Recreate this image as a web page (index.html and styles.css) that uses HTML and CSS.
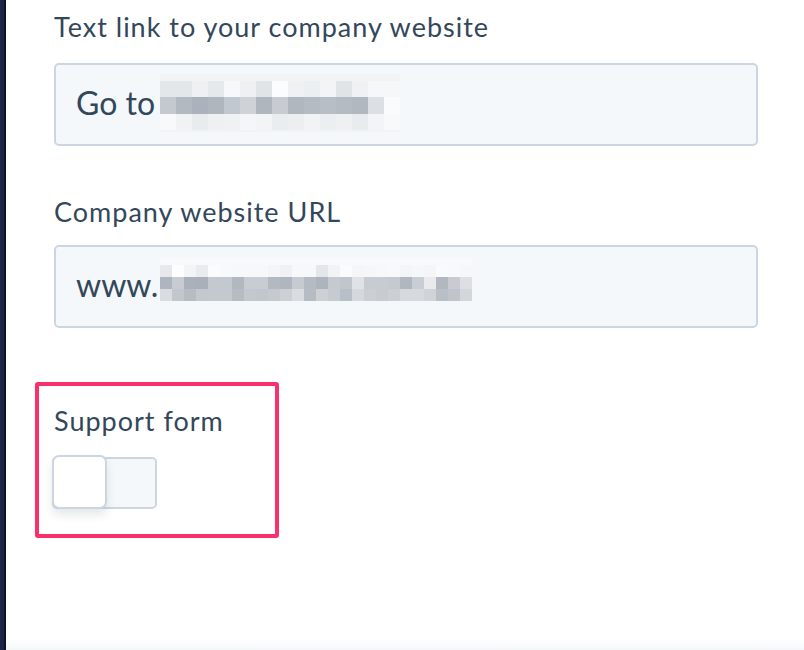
FILE: index.html
```html
<!DOCTYPE html>
<html lang="en">
<head>
<meta charset="utf-8">
<title>Settings</title>
<link rel="stylesheet" href="styles.css">
</head>
<body>
<div class="page">
  <aside class="rail"></aside>
  <main class="panel">
    <div class="field">
      <label class="label">Text link to your company website</label>
      <div class="input">
        <span class="value">Go to</span>
        <span class="blur blur-one">
          <span class="row r-faint"></span>
          <span class="row r1a"></span>
          <span class="row r1b"></span>
          <span class="row r1c"></span>
          <span class="row r-faint r-end"></span>
        </span>
      </div>
    </div>
    <div class="field field-second">
      <label class="label">Company website URL</label>
      <div class="input">
        <span class="value">www.</span>
        <span class="blur blur-two">
          <span class="row r-faint2"></span>
          <span class="row r2a"></span>
          <span class="row r2b"></span>
          <span class="row r2c"></span>
        </span>
      </div>
    </div>
    <div class="highlight">
      <div class="label">Support form</div>
      <div class="toggle">
        <span class="knob"></span>
      </div>
    </div>
  </main>
</div>
<div class="footer-shade"></div>
</body>
</html>
```
FILE: styles.css
```css
html, body {
  margin: 0;
  padding: 0;
  background: #ffffff;
  height: 100%;
  overflow: hidden;
}
body {
  font-family: Lato, "Open Sans", sans-serif;
  color: #33475b;
  position: relative;
}
.page {
  display: flex;
  height: 650px;
}
.rail {
  width: 4px;
  flex: none;
  background: #1e2448;
  border-right: 2px solid #0f1226;
}
.panel {
  flex: 1;
  padding: 0 46px 0 48px;
  display: flex;
  flex-direction: column;
}
.field {
  display: flex;
  flex-direction: column;
}
.label {
  display: block;
  font-size: 27px;
  line-height: 32px;
  letter-spacing: 1px;
  padding-top: 11px;
  color: #33475b;
  white-space: nowrap;
}
.input {
  margin-top: 20px;
  height: 79px;
  border: 2px solid #cbd6e2;
  border-radius: 5px;
  background: #f5f8fa;
  display: flex;
  align-items: center;
  padding-left: 20px;
}
.value {
  font-size: 32px;
  line-height: 40px;
  color: #33475b;
  margin-top: -4px;
}
.field-second {
  margin-top: 39px;
}
.field-second .input {
  margin-top: 17px;
}
.blur {
  display: flex;
  flex-direction: column;
  align-self: flex-start;
}
.blur-one {
  width: 240px;
  margin-left: 5px;
  margin-top: 9px;
}
.blur-two {
  width: 312px;
  margin-left: 2px;
  margin-top: 11px;
}
.row {
  display: block;
}
.r-faint { height: 7px; background: #f1f3f5; }
.r-end { height: 2px; }
.r-faint2 { height: 7px; background: #f8f9fa; }
.r1a {
  height: 16px;
  background: linear-gradient(90deg, #e4e7ea 0 32px, #eef0f2 32px 48px, #e6e9ec 48px 64px, #f7f8f9 64px 80px, #eef0f2 80px 96px, #e1e4e7 96px 112px, #fbfcfd 112px 128px, #eff1f3 128px 144px, #eceff1 144px 160px, #f3f4f6 160px 176px, #e1e4e7 176px 192px, #f0f1f3 192px 208px, #f5f7f9 208px 240px);
}
.r1b {
  height: 17px;
  background: linear-gradient(90deg, #c4c9d0 0 16px, #b3b9c1 16px 32px, #abb2bb 32px 48px, #afb6be 48px 64px, #c2c8d0 64px 80px, #cfd3d7 80px 96px, #afb6be 96px 112px, #c8ccd2 112px 128px, #b0b7bf 128px 144px, #b5bbc3 144px 160px, #b8bec5 160px 176px, #b5bbc3 176px 192px, #b1b8c0 192px 208px, #dcdfe3 208px 224px, #fafbfc 224px 240px);
}
.r1c {
  height: 16px;
  background: linear-gradient(90deg, #f8f9fa 0 16px, #f0f2f4 16px 32px, #e9ecee 32px 48px, #eef0f2 48px 64px, #eff1f3 64px 80px, #f5f6f7 80px 96px, #f3f4f6 96px 112px, #eaedef 112px 128px, #eceef0 128px 144px, #f1f3f4 144px 160px, #eceff1 160px 176px, #eef0f2 176px 192px, #e9ecee 192px 208px, #f3f4f6 208px 224px, #f8f9fa 224px 240px);
}
.r2a {
  height: 12px;
  background: linear-gradient(90deg, #e6e8eb 0 12px, #fdfdfe 12px 24px, #f3f4f6 24px 36px, #e9ecee 36px 48px, #fafbfc 48px 60px, #f8f9fa 60px 72px, #f7f8fa 72px 108px, #f4f5f7 108px 120px, #eff1f3 120px 132px, #f7f8fa 132px 156px, #e3e6ea 156px 168px, #f1f3f5 168px 180px, #fafbfc 180px 192px, #f5f6f8 192px 204px, #f6f7f9 204px 216px, #f7f8fa 216px 228px, #f8f9fb 228px 240px, #f4f5f7 240px 252px, #f6f7f9 252px 264px, #f4f5f7 264px 276px, #f9fafb 276px 288px, #f8f9fa 288px 300px, #f6f7f9 300px 312px);
}
.r2b {
  height: 12px;
  background: linear-gradient(90deg, #aeb5be 0 12px, #c7ccd3 12px 24px, #aab1ba 24px 36px, #a9b0b9 36px 48px, #c4c9d0 48px 72px, #b1b8c0 72px 84px, #c8ccd3 84px 108px, #b3b9c1 108px 120px, #afb6bf 120px 132px, #c6cbd1 132px 144px, #b5bbc3 144px 156px, #adb4bd 156px 168px, #c5cad0 168px 180px, #c1c6cd 180px 192px, #dfe2e6 192px 204px, #c7ccd2 204px 228px, #c5cad0 228px 240px, #b0b7bf 240px 252px, #c9ced4 252px 264px, #e8eaec 264px 276px, #b2b8c0 276px 288px, #c8ccd2 288px 300px, #dcdfe3 300px 312px);
}
.r2c {
  height: 12px;
  background: linear-gradient(90deg, #d9dce0 0 12px, #c2c7ce 12px 24px, #b6bcc4 24px 36px, #c3c8cf 36px 48px, #c4c9d0 48px 72px, #b6bcc4 72px 84px, #c3c8cf 84px 96px, #c2c7ce 96px 108px, #c5cad0 108px 120px, #cdd1d6 120px 132px, #d9dce0 132px 144px, #b6bcc4 144px 156px, #cdd1d6 156px 168px, #c6cbd1 168px 180px, #b9bfc6 180px 192px, #d5d9dd 192px 204px, #cbcfd4 204px 216px, #c7ccd2 216px 228px, #ccd0d5 228px 240px, #d6d9dd 240px 264px, #d0d3d8 264px 276px, #b9bfc6 276px 288px, #c0c5cc 288px 300px, #d3d7db 300px 312px);
}
.highlight {
  margin-top: 54px;
  margin-left: -19px;
  width: 244px;
  height: 156px;
  box-sizing: border-box;
  border: 4px solid #f8316b;
  border-radius: 3px;
  padding: 19px 0 0 15px;
}
.highlight .label {
  padding-top: 0;
}
.toggle {
  margin-top: 20px;
  width: 101px;
  height: 48px;
  border: 2px solid #cbd6e2;
  border-radius: 5px;
  background: #f5f8fa;
  position: relative;
  margin-left: -2px;
}
.knob {
  position: absolute;
  left: -2px;
  top: -4px;
  width: 51px;
  height: 50px;
  background: #ffffff;
  border: 2px solid #cbd6e2;
  border-radius: 7px;
  box-shadow: 0 6px 10px rgba(45, 62, 80, 0.12);
}
.footer-shade {
  position: absolute;
  left: 6px;
  right: 0;
  bottom: 0;
  height: 12px;
  background: linear-gradient(180deg, rgba(245, 248, 250, 0) 0%, #f5f8fa 100%);
}
```
